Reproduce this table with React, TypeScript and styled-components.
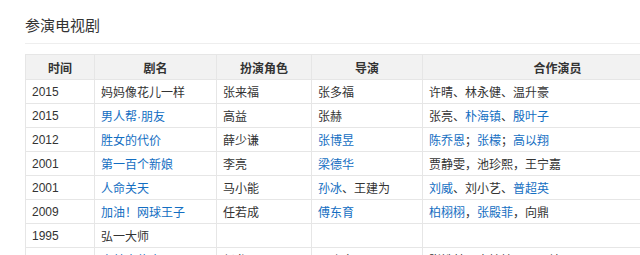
import React from "react";
import styled, { createGlobalStyle } from "styled-components";

const Global = createGlobalStyle`
  html, body { margin: 0; padding: 0; background: #fff; overflow: hidden; }
  body { font-family: Arial, "Liberation Sans", "Noto Sans CJK SC", sans-serif; color: #333; }
`;

const Page = styled.div`
  width: 640px;
  height: 255px;
  overflow: hidden;
  padding: 15px 0 0 25px;
  box-sizing: border-box;
`;

const Title = styled.h2`
  margin: 0;
  font-size: 15px;
  line-height: 20px;
  font-weight: normal;
  color: #333;
  padding-bottom: 8px;
  border-bottom: 1px solid #eeeeee;
  font-family: "Noto Sans CJK SC", sans-serif;
`;

const Table = styled.table`
  margin-top: 10px;
  width: 667px;
  table-layout: fixed;
  border-collapse: collapse;
  font-size: 12px;
`;

const Th = styled.th`
  background: #f2f2f2;
  border: 1px solid #e6e6e6;
  height: 24px;
  padding: 0;
  font-weight: bold;
  text-align: center;
  color: #333;
  font-family: "Noto Sans CJK SC", sans-serif;
  font-size: 12px;
`;

const Td = styled.td`
  border: 1px solid #e6e6e6;
  height: 23px;
  padding: 0 6px;
  text-align: left;
  color: #333;
  white-space: nowrap;
  overflow: hidden;
`;

const Link = styled.a`
  color: #136ec2;
  text-decoration: none;
`;

type Part = { t: string; link?: boolean };
type Row = Part[][];

const L = (t: string): Part => ({ t, link: true });
const T = (t: string): Part => ({ t });

const rows: Row[] = [
  [[T("2015")], [T("妈妈像花儿一样")], [T("张来福")], [T("张多福")], [T("许晴、林永健、温升豪")]],
  [[T("2015")], [L("男人帮·朋友")], [T("高益")], [T("张赫")], [T("张亮、"), L("朴海镇"), T("、"), L("殷叶子")]],
  [[T("2012")], [L("胜女的代价")], [T("薛少谦")], [L("张博昱")], [L("陈乔恩"), T("；"), L("张檬"), T("；"), L("高以翔")]],
  [[T("2001")], [L("第一百个新娘")], [T("李亮")], [L("梁德华")], [T("贾静雯，池珍熙，王宁嘉")]],
  [[T("2001")], [L("人命关天")], [T("马小能")], [L("孙冰"), T("、王建为")], [L("刘威"), T("、刘小艺、"), L("普超英")]],
  [[T("2009")], [L("加油！网球王子")], [T("任若成")], [L("傅东育")], [L("柏栩栩"), T("，"), L("张殿菲"), T("，向鼎")]],
  [[T("1995")], [T("弘一大师")], [], [], []],
  [[T("1994")], [L("少林寺传奇")], [T("赵龙")], [T("周晓文")], [T("张铁林、李婷婷、王丽坤")]],
];

const widths = [69, 122, 95, 111, 270];
const heads = ["时间", "剧名", "扮演角色", "导演", "合作演员"];

export default function App() {
  return (
    <>
      <Global />
      <Page>
        <Title>参演电视剧</Title>
        <Table>
          <colgroup>
            {widths.map((w, i) => (
              <col key={i} style={{ width: w }} />
            ))}
          </colgroup>
          <thead>
            <tr>
              {heads.map((h) => (
                <Th key={h}>{h}</Th>
              ))}
            </tr>
          </thead>
          <tbody>
            {rows.map((r, i) => (
              <tr key={i}>
                {r.map((cell, j) => (
                  <Td key={j}>
                    {cell.map((p, k) =>
                      p.link ? <Link key={k}>{p.t}</Link> : <span key={k}>{p.t}</span>
                    )}
                  </Td>
                ))}
              </tr>
            ))}
          </tbody>
        </Table>
      </Page>
    </>
  );
}
